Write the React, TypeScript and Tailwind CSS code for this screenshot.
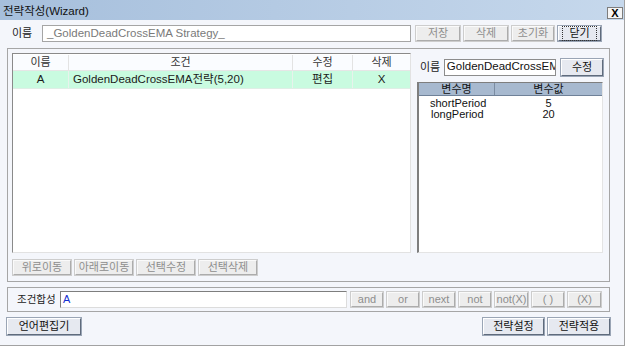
import React from 'react';

const font = "font-['Liberation_Sans','Noto_Sans_CJK_KR',sans-serif]";

function GrayButton({ label, className = '' }: { label: string; className?: string }) {
  return (
    <div
      className={`flex items-center justify-center whitespace-nowrap bg-[#ededed] border border-t-[#fafafa] border-l-[#fafafa] border-r-[#acacac] border-b-[#acacac] outline outline-1 outline-[#cdcdcd] text-[11px] leading-none text-[#8e8e8e] ${className}`}
    >
      {label}
    </div>
  );
}

function DarkButton({ label, focus = false, className = '' }: { label: string; focus?: boolean; className?: string }) {
  return (
    <div
      className={`flex items-center justify-center whitespace-nowrap bg-[#e6e9f0] border border-t-[#ffffff] border-l-[#ffffff] border-r-[#5f6b7c] border-b-[#5f6b7c] outline outline-1 outline-[#9aa5b5] text-[11px] leading-none text-[#111] ${className}`}
    >
      <span className={focus ? 'px-[6px] py-[1px] border border-dotted border-[#333]' : ''}>{label}</span>
    </div>
  );
}

function TitleBar() {
  return (
    <div className="h-[20px] flex justify-between bg-gradient-to-r from-[#a6bfdc] to-[#c6d8ec]">
      <span className="pl-[3px] pt-[5px] text-[11.5px] leading-[13px] text-[#111]">전략작성(Wizard)</span>
      <div className="mt-[7px] mr-[1px] w-[16px] h-[12px] flex items-center justify-center bg-[#f5f5f5] border border-[#7d7d7d] text-[11px] font-bold leading-none text-black">
        X
      </div>
    </div>
  );
}

function ConditionTable() {
  return (
    <div className="w-[399px] h-[200px] bg-white border border-t-[#8a8a8a] border-l-[#8a8a8a] border-r-[#e2e2e2] border-b-[#e2e2e2] flex flex-col">
      <div className="mt-[1px] h-[16px] flex text-[11px] leading-none text-[#333] border-b border-[#e6e6e6] bg-[#fafcff]">
        <div className="w-[56px] flex items-center justify-center border-r border-[#e3e3e3]">이름</div>
        <div className="w-[224px] flex items-center justify-center border-r border-[#e3e3e3]">조건</div>
        <div className="w-[60px] flex items-center justify-center border-r border-[#e3e3e3]">수정</div>
        <div className="flex-1 flex items-center justify-center">삭제</div>
      </div>
      <div className="h-[18px] flex text-[11.5px] leading-none text-[#1a1a1a] bg-[#c9fbe0] border-b border-[#dfeee6]">
        <div className="w-[56px] flex items-center justify-center border-r border-[#e8f2ec]">A</div>
        <div className="w-[224px] flex items-center pl-[4px] border-r border-[#e8f2ec]">GoldenDeadCrossEMA전략(5,20)</div>
        <div className="w-[60px] flex items-center justify-center border-r border-[#e8f2ec]">편집</div>
        <div className="flex-1 flex items-center justify-center">X</div>
      </div>
    </div>
  );
}

function VariablePanel() {
  return (
    <div className="w-[186px] flex flex-col">
      <div className="mt-[5px] h-[18px] flex items-center">
        <span className="w-[27px] pl-[3px] text-[11px] leading-none text-[#222]">이름</span>
        <div className="w-[113px] h-[17px] flex items-center bg-white border border-[#8c8c8c] overflow-hidden whitespace-nowrap pl-[2px] text-[11.5px] leading-none text-[#111]">
          GoldenDeadCrossEMA
        </div>
        <DarkButton label="수정" className="ml-[5px] w-[42px] h-[17px]" />
      </div>
      <div className="mt-[6px] h-[171px] bg-white border-l-2 border-t border-[#7e7e7e] border-r border-r-[#e4e4e4] border-b border-b-[#e4e4e4] flex flex-col">
        <div className="h-[13px] flex bg-[#a7b9cf] border-b border-[#6f8198] text-[11px] leading-none text-[#111]">
          <div className="w-[76px] flex items-center justify-center border-r border-[#7b8ca2]">변수명</div>
          <div className="flex-1 flex items-center justify-center">변수값</div>
        </div>
        <div className="pt-[2px] text-[11px] leading-[11px] text-[#111]">
          <div className="flex h-[11px]">
            <span className="w-[76px] pl-[11px]">shortPeriod</span>
            <span className="flex-1 text-center">5</span>
          </div>
          <div className="flex h-[11px]">
            <span className="w-[76px] pl-[12px]">longPeriod</span>
            <span className="flex-1 text-center">20</span>
          </div>
        </div>
      </div>
    </div>
  );
}

export default function App() {
  return (
    <div className={`w-[627px] h-[347px] bg-white ${font}`}>
      <div className="w-[625px] h-[346px] bg-[#f4f6fb] border-r border-b border-[#a2a2a2] flex flex-col">
        <TitleBar />

        <div className="mt-[5px] h-[17px] flex items-center">
          <span className="w-[42px] pl-[12px] text-[11px] leading-none text-[#222]">이름</span>
          <div className="w-[369px] h-[17px] flex items-center bg-white border border-[#a5a5a5] pl-[4px] text-[11.5px] leading-none text-[#7a7a7a]">
            _GoldenDeadCrossEMA Strategy_
          </div>
          <div className="ml-[5px] flex gap-[4px]">
            <GrayButton label="저장" className="w-[44px] h-[15px]" />
            <GrayButton label="삭제" className="w-[44px] h-[15px]" />
            <GrayButton label="초기화" className="w-[42px] h-[15px]" />
            <DarkButton label="닫기" focus className="w-[43px] h-[15px]" />
          </div>
        </div>

        <div className="mt-[6px] ml-[7px] w-[603px] h-[234px] border border-[#a6a6a6] pl-[4px] pt-[4px] flex flex-col">
          <div className="flex">
            <ConditionTable />
            <div className="ml-[6px]">
              <VariablePanel />
            </div>
          </div>
          <div className="mt-[7px] ml-[1px] flex gap-[4px]">
            <GrayButton label="위로이동" className="w-[58px] h-[15px]" />
            <GrayButton label="아래로이동" className="w-[58px] h-[15px]" />
            <GrayButton label="선택수정" className="w-[58px] h-[15px]" />
            <GrayButton label="선택삭제" className="w-[58px] h-[15px]" />
          </div>
        </div>

        <div className="mt-[5px] ml-[7px] w-[603px] h-[25px] border border-[#a6a6a6] flex items-center">
          <span className="w-[52px] pl-[9px] whitespace-nowrap text-[10.5px] leading-none text-[#222]">조건합성</span>
          <div className="w-[287px] h-[17px] flex items-center bg-white border border-t-[#7e7e7e] border-l-[#7e7e7e] border-r-[#dcdcdc] border-b-[#dcdcdc] pl-[2px] text-[11px] leading-none text-[#1530d0]">
            A
          </div>
          <div className="ml-[4px] flex gap-[4px]">
            <GrayButton label="and" className="w-[32px] h-[15px]" />
            <GrayButton label="or" className="w-[32px] h-[15px]" />
            <GrayButton label="next" className="w-[32px] h-[15px]" />
            <GrayButton label="not" className="w-[32px] h-[15px]" />
            <GrayButton label="not(X)" className="w-[33px] h-[15px]" />
            <GrayButton label="( )" className="w-[32px] h-[15px]" />
            <GrayButton label="(X)" className="w-[33px] h-[15px]" />
          </div>
        </div>

        <div className="mt-[6px] ml-[7px] w-[603px] flex justify-between">
          <DarkButton label="언어편집기" className="w-[74px] h-[17px]" />
          <div className="flex gap-[4px]">
            <DarkButton label="전략설정" className="w-[61px] h-[17px]" />
            <DarkButton label="전략적용" className="w-[62px] h-[17px]" />
          </div>
        </div>
      </div>
    </div>
  );
}
